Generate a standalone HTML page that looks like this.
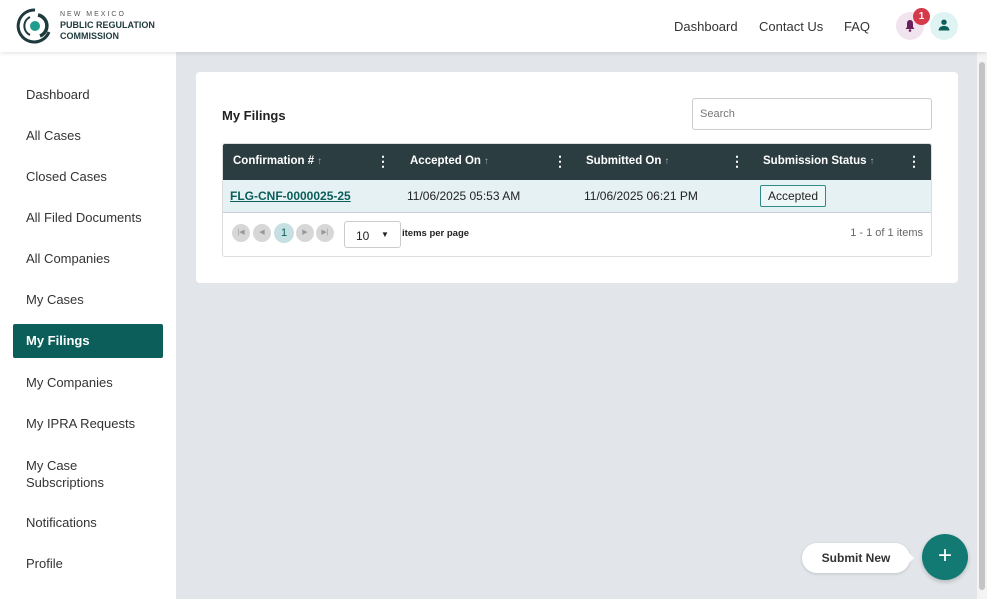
<!DOCTYPE html>
<html><head><meta charset="utf-8"><style>
*{box-sizing:border-box;margin:0;padding:0}
body{width:987px;height:599px;overflow:hidden;font-family:"Liberation Sans",sans-serif;background:#e2e6ea;position:relative;color:#222}
.top{position:absolute;left:0;top:0;width:987px;height:52px;background:#fff;box-shadow:0 1px 4px rgba(0,0,0,.12);z-index:2}
.side{position:absolute;left:0;top:52px;width:176px;height:547px;background:#fff}
.side div{position:absolute;left:26px;font-size:13px;color:#333}
.side .act{left:13px;width:150px;height:34px;background:#0b5e5a;color:#fff;font-weight:bold;padding:9px 13px;border-radius:2px}
.nav{position:absolute;top:19px;font-size:13px;color:#333}
.card{position:absolute;left:196px;top:72px;width:762px;height:211px;background:#fff;border-radius:4px}
.tbl{position:absolute;left:26px;top:71px;width:710px;height:114px;border:1px solid #ddd;border-radius:3px;overflow:hidden}
.th{position:absolute;top:0;left:0;width:710px;height:36px;background:#2b3d40;color:#fff;font-size:11.5px;font-weight:bold}
.th span{position:absolute;top:11px}
.th small{font-weight:normal;color:#aab}
.th i{position:absolute;top:9px;font-style:normal;font-size:14px}
.row{position:absolute;top:36px;left:0;width:710px;height:33px;background:#e5f1f3;border-bottom:1px solid #ccd;font-size:12px}
.row span{position:absolute;top:9px}
.pg{position:absolute;top:80px;width:18px;height:18px;border-radius:50%;background:#d7d7d7;font-size:7px;color:#999;text-align:center;line-height:18px}
.scroll{position:absolute;right:0;top:52px;width:10px;height:547px;background:#f4f4f4}
.scroll div{position:absolute;left:2px;top:10px;width:6px;height:528px;background:#c4c4c4;border-radius:3px}
</style></head><body>
<div class="top">
<svg style="position:absolute;left:16px;top:7px" width="38" height="38" viewBox="0 0 38 38"><path d="M19 3 A16 16 0 1 0 33 25" fill="none" stroke="#1e3a3c" stroke-width="3"/><path d="M22 8 A11 11 0 0 1 24 29" fill="none" stroke="#1e3a3c" stroke-width="3.5"/><path d="M14 10 A10 10 0 0 0 14 28" fill="none" stroke="#1e3a3c" stroke-width="2"/><circle cx="19" cy="19" r="5" fill="#1e9c8e"/></svg>
<div style="position:absolute;left:60px;top:11px;font-size:7px;letter-spacing:2px;color:#555">NEW MEXICO</div>
<div style="position:absolute;left:60px;top:20px;font-size:9px;font-weight:bold;color:#1e3a3c;line-height:11px">PUBLIC REGULATION<br>COMMISSION</div>
<div class="nav" style="left:674px">Dashboard</div>
<div class="nav" style="left:759px">Contact Us</div>
<div class="nav" style="left:844px">FAQ</div>
<div style="position:absolute;left:896px;top:12px;width:28px;height:28px;border-radius:50%;background:#f1e4ee"></div>
<svg style="position:absolute;left:904px;top:19px" width="12" height="13" viewBox="0 0 12 13"><path d="M6 1C3.5 1 3 3 3 5v3L1.5 10h9L9 8V5C9 3 8.5 1 6 1z" fill="#6b1f5a"/><circle cx="6" cy="11.5" r="1.3" fill="#6b1f5a"/></svg>
<div style="position:absolute;left:913px;top:8px;width:17px;height:17px;border-radius:50%;background:#d43a4a;color:#fff;font-size:10px;font-weight:bold;text-align:center;line-height:17px">1</div>
<div style="position:absolute;left:930px;top:12px;width:28px;height:28px;border-radius:50%;background:#dff3f3"></div>
<svg style="position:absolute;left:938px;top:19px" width="12" height="12" viewBox="0 0 12 12"><circle cx="6" cy="3.2" r="2.7" fill="#0b5e5a"/><path d="M0.5 11.5C1 8 3 7 6 7s5 1 5.5 4.5z" fill="#0b5e5a"/></svg>
</div>
<div class="side">
<div style="top:35px">Dashboard</div>
<div style="top:76px">All Cases</div>
<div style="top:117px">Closed Cases</div>
<div style="top:158px">All Filed Documents</div>
<div style="top:199px">All Companies</div>
<div style="top:240px">My Cases</div>
<div class="act" style="top:272px">My Filings</div>
<div style="top:323px">My Companies</div>
<div style="top:364px">My IPRA Requests</div>
<div style="top:405px;line-height:17px">My Case<br>Subscriptions</div>
<div style="top:463px">Notifications</div>
<div style="top:504px">Profile</div>
</div>
<div class="card">
<div style="position:absolute;left:26px;top:36px;font-size:13px;font-weight:bold">My Filings</div>
<div style="position:absolute;left:496px;top:26px;width:240px;height:32px;border:1px solid #ccc;border-radius:3px;font-size:11px;color:#777;padding:9px 7px">Search</div>
<div class="tbl">
<div class="th">
<span style="left:10px">Confirmation # <small>↑</small></span><i style="left:153px">⋮</i>
<span style="left:187px">Accepted On <small>↑</small></span><i style="left:330px">⋮</i>
<span style="left:363px">Submitted On <small>↑</small></span><i style="left:507px">⋮</i>
<span style="left:540px">Submission Status <small>↑</small></span><i style="left:684px">⋮</i>
</div>
<div class="row">
<span style="left:7px;color:#0b5e5a;text-decoration:underline;font-weight:bold">FLG-CNF-0000025-25</span>
<span style="left:184px">11/06/2025 05:53 AM</span>
<span style="left:361px">11/06/2025 06:21 PM</span>
<span style="left:537px;top:5px;border:1px solid #2c8a88;background:#eef7f7;border-radius:2px;padding:3px 7px">Accepted</span>
</div>
<div class="pg" style="left:9px">|◀</div><div class="pg" style="left:30px">◀</div>
<div class="pg" style="left:51px;width:20px;height:20px;top:79px;background:#c6dfe2;color:#0b5e5a;font-size:11px;line-height:20px">1</div>
<div class="pg" style="left:73px">▶</div><div class="pg" style="left:93px">▶|</div>
<div style="position:absolute;left:121px;top:77px;width:57px;height:27px;border:1px solid #ccc;border-radius:3px;font-size:12px;white-space:nowrap"><span style="position:absolute;left:11px;top:7px">10</span><span style="position:absolute;left:36px;top:8px;font-size:8px">▼</span></div>
<div style="position:absolute;left:179px;top:84px;font-size:9.5px;font-weight:bold">items per page</div>
<div style="position:absolute;right:8px;top:83px;font-size:11px;color:#666">1 - 1 of 1 items</div>
</div>
</div>
<div style="position:absolute;left:802px;top:543px;width:108px;height:30px;background:#fff;border-radius:15px;box-shadow:0 1px 3px rgba(0,0,0,.15);font-size:12px;font-weight:bold;color:#333;text-align:center;line-height:30px">Submit New</div>
<div style="position:absolute;left:908px;top:552px;width:0;height:0;border-left:6px solid #fff;border-top:6px solid transparent;border-bottom:6px solid transparent"></div>
<div style="position:absolute;left:922px;top:534px;width:46px;height:46px;border-radius:50%;background:#137a73;color:#fff;font-size:24px;text-align:center;line-height:44px;box-shadow:0 2px 4px rgba(0,0,0,.2)">+</div>
<div class="scroll"><div></div></div>
</body></html>
